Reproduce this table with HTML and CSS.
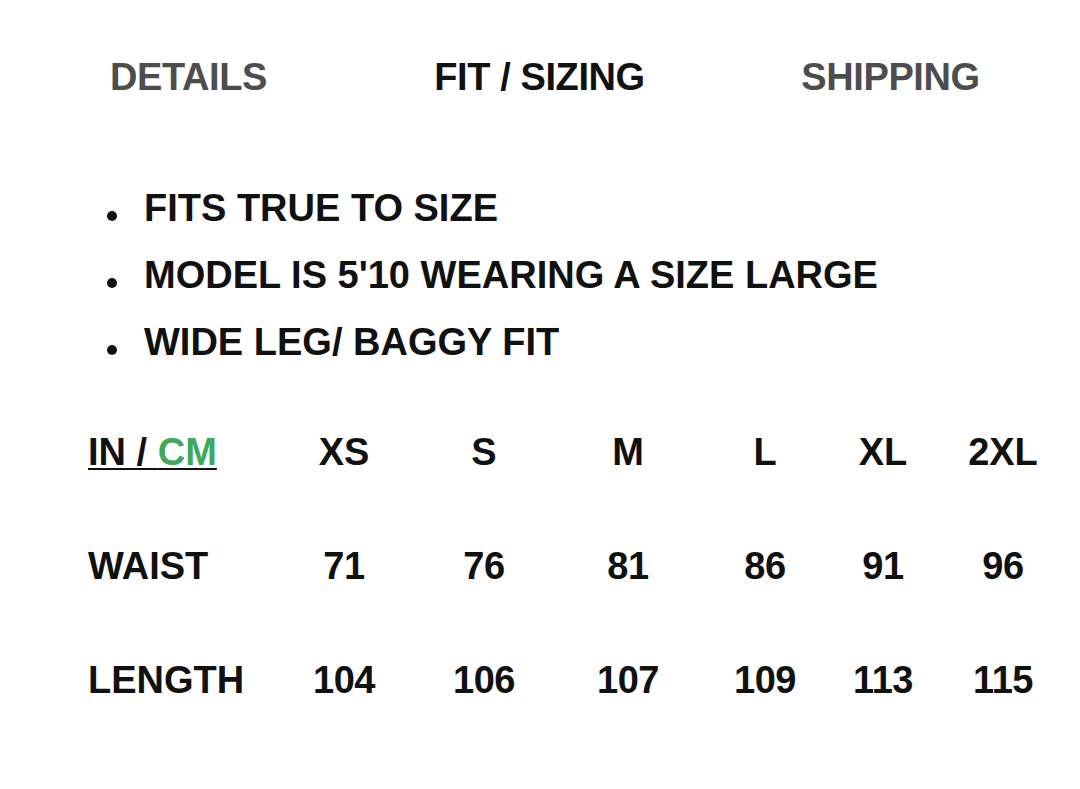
FILE: index.html
```html
<!DOCTYPE html>
<html lang="en">
<head>
<meta charset="utf-8">
<title>Fit / Sizing</title>
<link rel="stylesheet" href="styles.css">
</head>
<body>
<div class="page">
  <nav class="tabs">
    <div class="tab">DETAILS</div>
    <div class="tab tab-active">FIT / SIZING</div>
    <div class="tab">SHIPPING</div>
  </nav>

  <ul class="fit-list">
    <li class="fit-item"><span class="dot"></span><span>FITS TRUE TO SIZE</span></li>
    <li class="fit-item"><span class="dot"></span><span>MODEL IS 5'10 WEARING A SIZE LARGE</span></li>
    <li class="fit-item"><span class="dot"></span><span>WIDE LEG/ BAGGY FIT</span></li>
  </ul>

  <div class="size-table">
    <div class="cell label"><span class="unit">IN / <span class="cm">CM</span></span></div>
    <div class="cell">XS</div>
    <div class="cell">S</div>
    <div class="cell">M</div>
    <div class="cell">L</div>
    <div class="cell">XL</div>
    <div class="cell">2XL</div>

    <div class="cell label">WAIST</div>
    <div class="cell num">71</div>
    <div class="cell num">76</div>
    <div class="cell num">81</div>
    <div class="cell num">86</div>
    <div class="cell num">91</div>
    <div class="cell num">96</div>

    <div class="cell label">LENGTH</div>
    <div class="cell num">104</div>
    <div class="cell num">106</div>
    <div class="cell num">107</div>
    <div class="cell num">109</div>
    <div class="cell num">113</div>
    <div class="cell num">115</div>
  </div>
</div>
</body>
</html>
```

FILE: styles.css
```css
html, body {
  margin: 0;
  padding: 0;
  background: #ffffff;
}

body {
  font-family: "Liberation Sans", Arial, Helvetica, sans-serif;
  font-weight: 700;
  font-size: 38px;
  color: #111111;
  width: 1080px;
  height: 789px;
  overflow: hidden;
}

.page {
  padding-top: 55px;
}

.tabs {
  display: grid;
  grid-template-columns: repeat(3, 351px);
  padding-left: 13px;
  line-height: 44px;
}

.tab {
  text-align: center;
  color: #4d4d4d;
  letter-spacing: -0.4px;
}

.tab-active {
  color: #111111;
}

.fit-list {
  list-style: none;
  margin: 76px 0 0 0;
  padding: 0 0 0 107px;
  line-height: 67px;
}

.fit-item {
  display: flex;
  align-items: flex-start;
}

.dot {
  width: 10px;
  height: 10px;
  border-radius: 50%;
  background: #111111;
  margin-top: 36px;
  margin-right: 27px;
  flex: none;
}

.size-table {
  display: grid;
  grid-template-columns: 187px 138px 142px 146px 128px 108px 132px;
  grid-auto-rows: 44px;
  row-gap: 70px;
  margin-top: 54px;
  padding-left: 88px;
  line-height: 44px;
}

.cell {
  text-align: center;
}

.cell.label {
  text-align: left;
}

.num {
  letter-spacing: -0.5px;
}

.unit {
  text-decoration: underline;
  text-decoration-color: #111111;
  text-decoration-thickness: 2px;
  text-underline-offset: 3px;
}

.cm {
  color: #3fa95b;
}
```
